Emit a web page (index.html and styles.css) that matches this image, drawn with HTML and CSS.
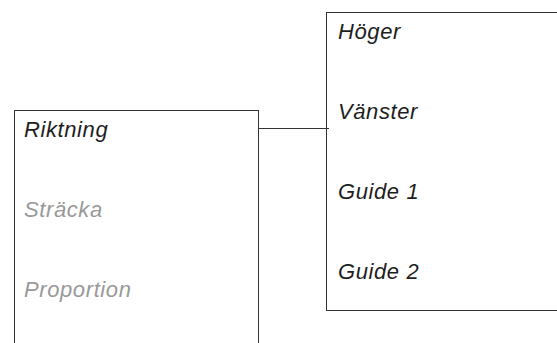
FILE: index.html
```html
<!DOCTYPE html>
<html lang="sv">
<head>
    <meta charset="UTF-8">
    <meta name="viewport" content="width=device-width, initial-scale=1.0">
    <title>Riktning</title>
    <link rel="stylesheet" href="styles.css">
</head>
<body>
    <div class="scene">
        <ul class="menu menu-main">
            <li>Riktning</li>
            <li class="disabled">Sträcka</li>
            <li class="disabled">Proportion</li>
        </ul>
        <div class="connector"></div>
        <ul class="menu menu-sub">
            <li>Höger</li>
            <li>Vänster</li>
            <li>Guide 1</li>
            <li>Guide 2</li>
        </ul>
    </div>
</body>
</html>
```

FILE: styles.css
```css
html, body {
    margin: 0;
    padding: 0;
    background-color: #fff;
    overflow: hidden;
}
body {
    font-family: "Liberation Sans", Arial, sans-serif;
    width: 557px;
    height: 343px;
}
.scene {
    display: flex;
    align-items: flex-start;
    padding-left: 14px;
}
.menu {
    list-style: none;
    margin: 0;
    padding: 0;
    border: 1px solid #333;
    box-sizing: border-box;
    flex-shrink: 0;
}
.menu li {
    height: 80px;
    box-sizing: border-box;
    padding: 7px 0 0 9px;
    font-size: 22px;
    font-style: italic;
    letter-spacing: 0.6px;
    line-height: 24px;
    color: #1e1e1e;
}
.menu li.disabled {
    color: #999;
}
/* cut off by the bottom of the window */
.menu-main {
    width: 245px;
    height: 233px;
    margin-top: 110px;
    border-bottom: none;
    overflow: hidden;
}
/* cut off by the right side of the window */
.menu-sub {
    width: 232px;
    height: 299px;
    margin-top: 12px;
    border-right: none;
}
.menu-sub li {
    padding-left: 11px;
}
.connector {
    width: 70px;
    margin-top: 128px;
    margin-right: -3px;
    border-top: 1px solid #333;
    flex-shrink: 0;
}
```
